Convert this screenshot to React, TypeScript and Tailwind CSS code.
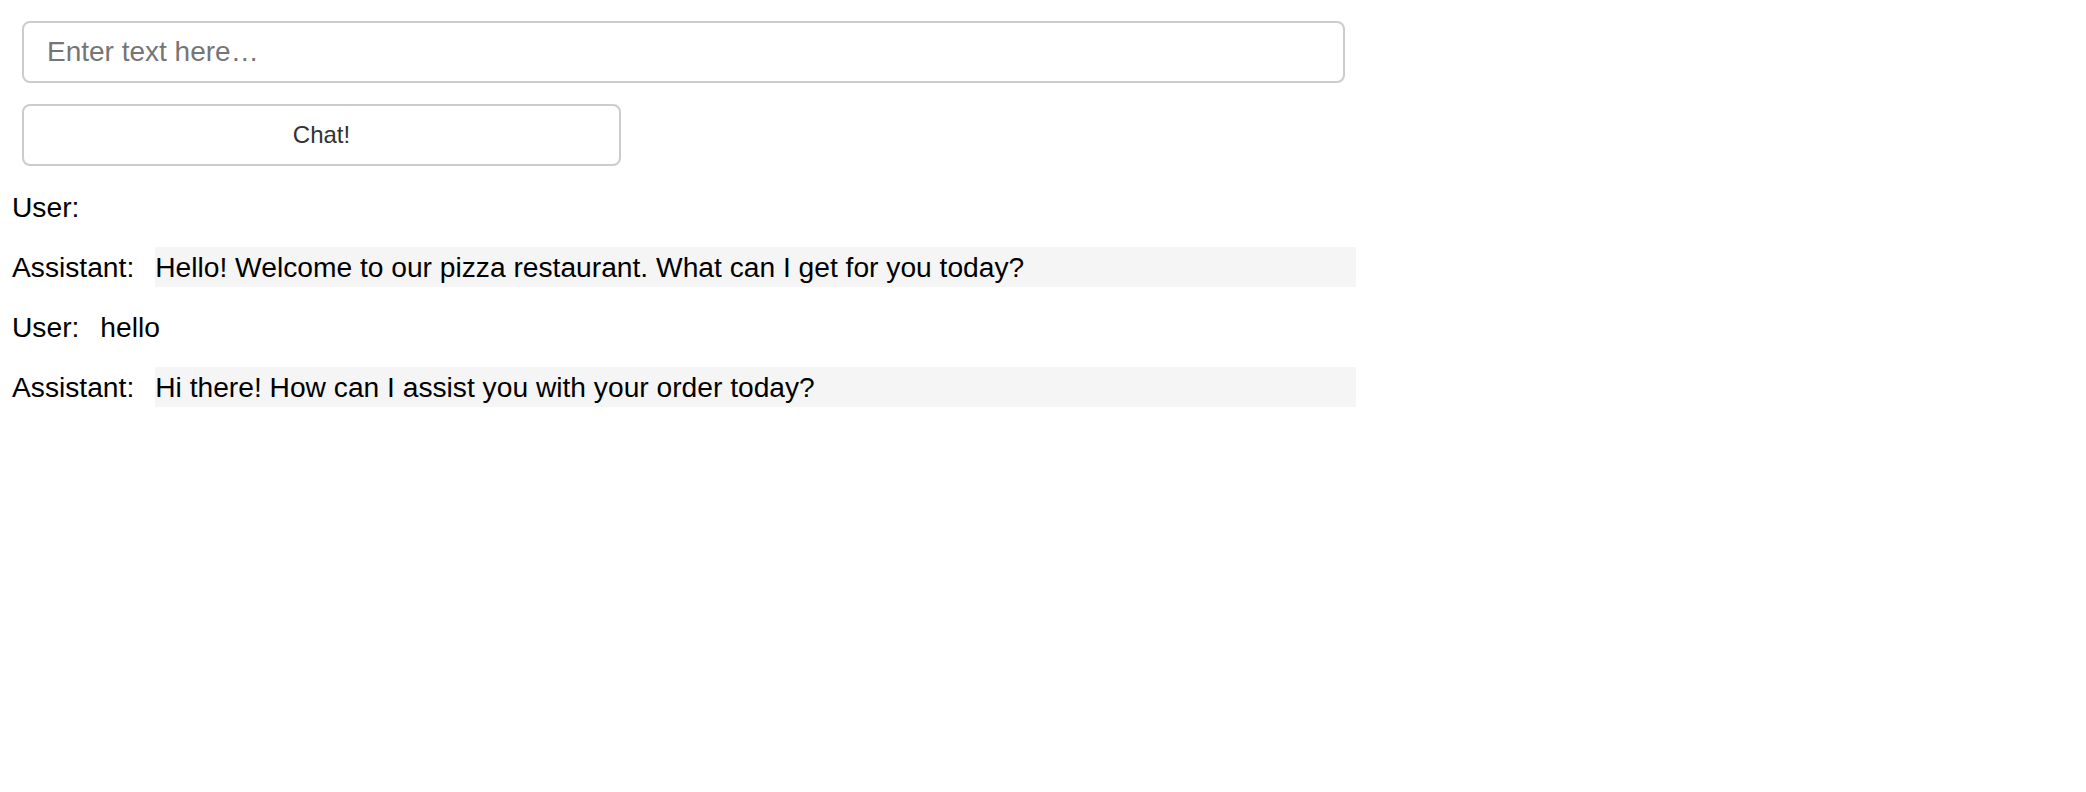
import React, { useState } from "react";

type Msg = { role: "User" | "Assistant"; text: string };

const messages: Msg[] = [
  { role: "User", text: "" },
  {
    role: "Assistant",
    text: "Hello! Welcome to our pizza restaurant. What can I get for you today?",
  },
  { role: "User", text: "hello" },
  { role: "Assistant", text: "Hi there! How can I assist you with your order today?" },
];

const App = () => {
  const [value, setValue] = useState("");

  return (
    <div className="w-[1368px] px-[12px] font-['Liberation_Sans',Arial,sans-serif] text-black">
      <div className="pl-[10px] pt-[21px]">
        <input
          value={value}
          onChange={(e) => setValue(e.target.value)}
          placeholder="Enter text here…"
          className="block w-[1323px] h-[62px] border-2 border-[#cccccc] rounded-[8px] pl-[23px] text-[28px] outline-none placeholder:text-[#757575]"
        />
        <button className="mt-[21px] block w-[599px] h-[62px] border-2 border-[#cccccc] rounded-[8px] bg-white text-[24px] text-[#333333]">
          Chat!
        </button>
      </div>

      <div className="mt-[21px] flex flex-col gap-[20px]">
        {messages.map((m, i) => (
          <div key={i} className="flex h-[40px] gap-[21px] text-[28.2px] leading-[40px]">
            <span className="shrink-0">{m.role}:</span>
            <span className={m.role === "Assistant" ? "flex-1 bg-[#f5f5f5]" : "flex-1"}>
              {m.text}
            </span>
          </div>
        ))}
      </div>
    </div>
  );
};

export default App;
